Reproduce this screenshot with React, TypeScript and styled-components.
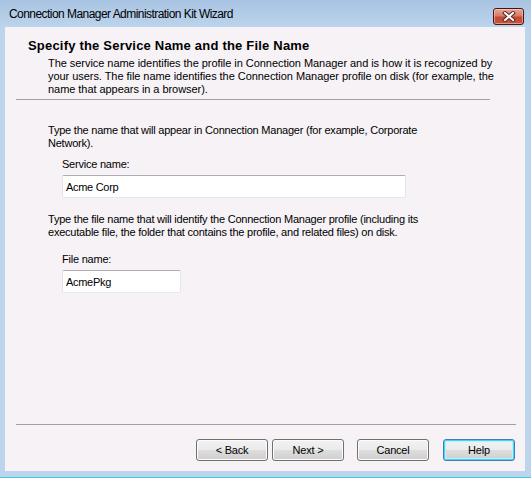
import React from "react";
import styled, { createGlobalStyle } from "styled-components";

const GlobalStyle = createGlobalStyle`
  html, body {
    margin: 0;
    padding: 0;
    background: #b9d1ea;
  }
  * {
    box-sizing: border-box;
  }
`;

const Window = styled.div`
  display: flex;
  flex-flow: column nowrap;
  width: 531px;
  height: 478px;
  background: #bcd4ec;
  border-bottom: 1px solid #3cc7e4;
  font-family: "Liberation Sans", Arial, sans-serif;
  color: #000;
  overflow: hidden;
`;

const TitleBar = styled.div`
  display: flex;
  flex-flow: row nowrap;
  align-items: flex-start;
  justify-content: space-between;
  height: 27px;
  padding: 7px 7px 0 9px;
  background: linear-gradient(#a8c3e2 0%, #b4cde8 60%, #bcd4ec 100%);
`;

const TitleText = styled.span`
  font-family: "Liberation Sans", Arial, sans-serif;
  font-size: 12px;
  letter-spacing: -0.55px;
  line-height: 15px;
  color: #000;
`;

const CloseButton = styled.div`
  display: flex;
  align-items: center;
  justify-content: center;
  width: 31px;
  height: 17px;
  margin-top: 1px;
  border: 1px solid #4a1410;
  border-radius: 3px;
  background: linear-gradient(#e9a99a 0%, #d67a68 45%, #c14b35 55%, #c6523b 100%);
  box-shadow: inset 0 0 0 1px rgba(255, 220, 210, 0.5);
`;

const Frame = styled.div`
  flex: 1;
  display: flex;
  padding: 0 6px 6px 5px;
`;

const Client = styled.div`
  flex: 1;
  display: flex;
  flex-flow: column nowrap;
  background: #f6f2f5;
  font-size: 11px;
  letter-spacing: -0.22px;
`;

const Header = styled.div`
  display: flex;
  flex-flow: column nowrap;
  padding: 12px 0 0 23px;
`;

const Heading = styled.div`
  font-size: 13px;
  font-weight: bold;
  letter-spacing: 0.2px;
  line-height: 14px;
`;

const Subtitle = styled.div`
  width: 470px;
  margin-top: 4px;
  padding-left: 20px;
  line-height: 13px;
  letter-spacing: -0.05px;
`;

const Separator = styled.div<{ $width: number; $top: number }>`
  width: ${(p) => p.$width}px;
  height: 1px;
  margin: ${(p) => p.$top}px 0 0 11px;
  background: #a0a0a0;
`;

const Content = styled.div`
  display: flex;
  flex-flow: column nowrap;
  padding: 24px 0 0 43px;
`;

const Paragraph = styled.div<{ $top?: number }>`
  width: 400px;
  margin-top: ${(p) => p.$top || 0}px;
  line-height: 13px;
`;

const Field = styled.div<{ $top: number }>`
  display: flex;
  flex-flow: column nowrap;
  padding: ${(p) => p.$top}px 0 0 14px;
`;

const Label = styled.label`
  line-height: 13px;
  margin-bottom: 4px;
`;

const TextBox = styled.div<{ $width: number }>`
  display: flex;
  align-items: center;
  width: ${(p) => p.$width}px;
  height: 23px;
  padding: 0 3px;
  background: #fff;
  border: 1px solid #e2e3ea;
  border-top-color: #abadb3;
  border-bottom-color: #e3e9ef;
  border-radius: 2px;
  font-size: 11px;
  letter-spacing: -0.3px;
`;

const Footer = styled.div`
  margin-top: auto;
  display: flex;
  flex-flow: column nowrap;
  padding-bottom: 10px;
`;

const ButtonRow = styled.div`
  display: flex;
  flex-flow: row nowrap;
  justify-content: flex-end;
  padding: 14px 10px 0 0;
`;

const Button = styled.div<{ $gap: number; $default?: boolean }>`
  display: flex;
  align-items: center;
  justify-content: center;
  width: 72px;
  height: 22px;
  margin-left: ${(p) => p.$gap}px;
  border: 1px solid ${(p) => (p.$default ? "#3c7fb1" : "#707070")};
  border-radius: 3px;
  background: linear-gradient(#f2f2f2 0%, #ebebeb 48%, #dddddd 52%, #cfcfcf 100%);
  box-shadow: ${(p) =>
    p.$default ? "inset 0 0 0 1px #48d4f8, inset 0 0 0 2px #c2ecfb" : "inset 0 0 0 1px #fcfcfc"};
  font-size: 11px;
  letter-spacing: -0.2px;
  color: #000;
`;

const CloseIcon = () => (
  <svg width="14" height="11" viewBox="0 0 14 11">
    <path
      d="M3 2 L11 9 M11 2 L3 9"
      stroke="#5a2a24"
      strokeWidth="4"
      strokeLinecap="square"
      fill="none"
    />
    <path
      d="M3 2 L11 9 M11 2 L3 9"
      stroke="#ffffff"
      strokeWidth="2"
      strokeLinecap="square"
      fill="none"
    />
  </svg>
);

const App = () => {
  return (
    <>
      <GlobalStyle />
      <Window>
        <TitleBar>
          <TitleText>Connection Manager Administration Kit Wizard</TitleText>
          <CloseButton>
            <CloseIcon />
          </CloseButton>
        </TitleBar>
        <Frame>
          <Client>
            <Header>
              <Heading>Specify the Service Name and the File Name</Heading>
              <Subtitle>
                The service name identifies the profile in Connection Manager and is how it is
                recognized by your users. The file name identifies the Connection Manager profile
                on disk (for example, the name that appears in a browser).
              </Subtitle>
            </Header>
            <Separator $width={474} $top={3} />
            <Content>
              <Paragraph>
                Type the name that will appear in Connection Manager (for example, Corporate
                Network).
              </Paragraph>
              <Field $top={8}>
                <Label>Service name:</Label>
                <TextBox $width={344}>Acme Corp</TextBox>
              </Field>
              <Paragraph $top={15}>
                Type the file name that will identify the Connection Manager profile (including its
                executable file, the folder that contains the profile, and related files) on disk.
              </Paragraph>
              <Field $top={14}>
                <Label>File name:</Label>
                <TextBox $width={119}>AcmePkg</TextBox>
              </Field>
            </Content>
            <Footer>
              <Separator $width={500} $top={0} />
              <ButtonRow>
                <Button $gap={0}>&lt; Back</Button>
                <Button $gap={4}>Next &gt;</Button>
                <Button $gap={13}>Cancel</Button>
                <Button $gap={14} $default>
                  Help
                </Button>
              </ButtonRow>
            </Footer>
          </Client>
        </Frame>
      </Window>
    </>
  );
};

export default App;
